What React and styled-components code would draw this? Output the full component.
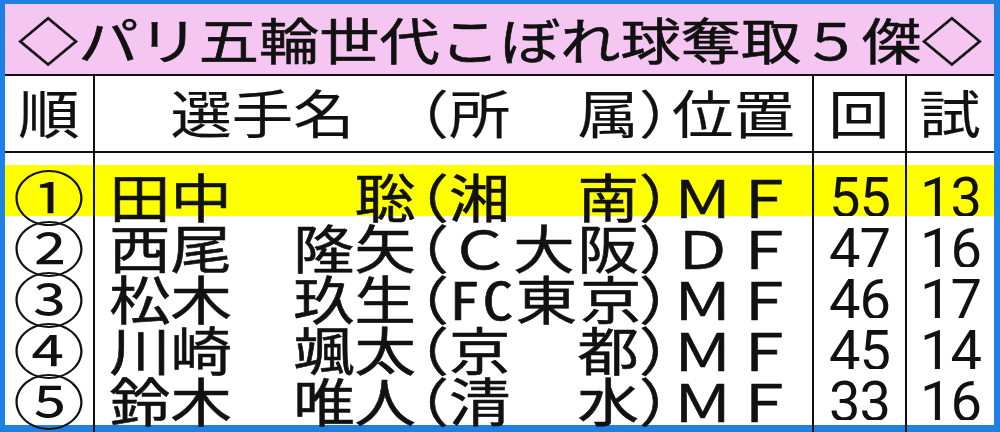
import React from "react";
import styled, { createGlobalStyle } from "styled-components";

const GlobalStyle = createGlobalStyle`
  html, body { margin: 0; padding: 0; background: #fff; }
  body {
    width: 1000px; height: 432px; overflow: hidden;
    font-family: "Noto Sans CJK JP", "Noto Sans", sans-serif;
    color: #111;
  }
`;

const INK = "#111";

const Frame = styled.div`
  width: 1000px;
  height: 432px;
  box-sizing: border-box;
  border-style: solid;
  border-color: #1d80e2;
  border-width: 4px 6px 7px 5px;
  background: #fff;
  display: flex;
  flex-direction: column;
`;

const TitleBar = styled.div`
  flex: none;
  height: 72px;
  box-sizing: border-box;
  background: #f6c6f2;
  border-bottom: 2px solid ${INK};
  display: flex;
  align-items: center;
  justify-content: center;
  overflow: hidden;
`;

const TitleText = styled.h1`
  margin: 0;
  font-size: 50px;
  font-weight: 400;
  -webkit-text-stroke: 0.6px ${INK};
  letter-spacing: 0;
  line-height: 1;
  padding-bottom: 2px;
  white-space: nowrap;
  transform: scaleX(1.205);
`;

const Body = styled.div`
  flex: 1;
  display: flex;
  flex-direction: column;
`;

const Row = styled.div`
  flex: ${(p) => (p.$grow ? "1" : "none")};
  display: grid;
  grid-template-columns: 88px 719px 93px 1fr;
  height: ${(p) => (p.$h ? `${p.$h}px` : "auto")};
  box-sizing: border-box;
  background: ${(p) => (p.$hl ? "#ffff00" : "#fff")};
  border-bottom: ${(p) => (p.$rule ? `2px solid ${INK}` : "none")};
  font-weight: 400;
  -webkit-text-stroke: ${(p) => (p.$head ? "0.2px" : "0.6px")} ${INK};
`;

const Cell = styled.div`
  display: flex;
  align-items: center;
  justify-content: ${(p) => (p.$left ? "flex-start" : "center")};
  border-left: 2px solid ${INK};
  overflow: visible;
  min-width: 0;
  &:first-child { border-left: none; }
`;

const Flat = styled.span`
  display: inline-block;
  font-size: 52px;
  line-height: 1;
  transform: scaleX(1.18);
  padding-bottom: 4px;
`;

const Circled = styled.span`
  display: inline-block;
  font-size: 60px;
  line-height: 1;
  -webkit-text-stroke: 0px;
  transform: scale(1.2, 1);
  padding-bottom: 5px;
`;

const NameGrid = styled.div`
  flex: none;
  width: 608px;
  box-sizing: border-box;
  padding-left: 12px;
  display: grid;
  grid-template-columns: 260px 28px 161px 26px 1fr;
  align-items: center;
  font-size: 52px;
  line-height: 1;
  padding-bottom: 4px;
  transform: scaleX(1.18);
  transform-origin: left center;
  white-space: nowrap;
`;

const Names = styled.div`
  display: flex;
  justify-content: ${(p) => (p.$center ? "center" : "space-between")};
`;

const Paren = styled.span`
  display: flex;
  justify-content: ${(p) => (p.$open ? "flex-end" : "flex-start")};
  font-feature-settings: "halt";
`;

const Team = styled.span`
  text-align: justify;
  text-align-last: justify;
  font-feature-settings: ${(p) => (p.$tight ? '"hwid"' : "normal")};
  letter-spacing: ${(p) => (p.$tight ? "-2px" : "0")};
`;

const Pos = styled.span`
  padding-left: 2px;
`;

const Num = styled.span`
  font-family: Roboto, "Liberation Sans", sans-serif;
  font-weight: 400;
  -webkit-text-stroke: 0px;
  font-size: 56px;
  line-height: 1;
  letter-spacing: -1px;
`;

const players = [
  { rank: "①", family: "田中", given: "聡", team: "湘　南", pos: "ＭＦ", k: 55, g: 13, hl: true },
  { rank: "②", family: "西尾", given: "隆矢", team: "Ｃ大阪", pos: "ＤＦ", k: 47, g: 16 },
  { rank: "③", family: "松木", given: "玖生", team: "ＦＣ東京", pos: "ＭＦ", k: 46, g: 17, tight: true },
  { rank: "④", family: "川崎", given: "颯太", team: "京　都", pos: "ＭＦ", k: 45, g: 14 },
  { rank: "⑤", family: "鈴木", given: "唯人", team: "清　水", pos: "ＭＦ", k: 33, g: 16 },
];

function EmptyRow({ h, grow }) {
  return (
    <Row $h={h} $grow={grow}>
      <Cell />
      <Cell />
      <Cell />
      <Cell />
    </Row>
  );
}

export default function App() {
  return (
    <>
      <GlobalStyle />
      <Frame>
        <TitleBar>
          <TitleText>◇パリ五輪世代こぼれ球奪取５傑◇</TitleText>
        </TitleBar>
        <Row $h={77} $rule $head>
          <Cell><Flat>順</Flat></Cell>
          <Cell $left>
            <NameGrid>
              <Names $center>選手名</Names>
              <Paren $open>（</Paren>
              <Team>所　属</Team>
              <Paren>）</Paren>
              <Pos>位置</Pos>
            </NameGrid>
          </Cell>
          <Cell><Flat>回</Flat></Cell>
          <Cell><Flat>試</Flat></Cell>
        </Row>
        <Body>
          <EmptyRow h={12} />
          {players.map((p) => (
            <Row key={p.rank} $h={51} $hl={p.hl}>
              <Cell><Circled>{p.rank}</Circled></Cell>
              <Cell $left>
                <NameGrid>
                  <Names>
                    <span>{p.family}</span>
                    <span>{p.given}</span>
                  </Names>
                  <Paren $open>（</Paren>
                  <Team $tight={p.tight}>{p.team}</Team>
                  <Paren>）</Paren>
                  <Pos>{p.pos}</Pos>
                </NameGrid>
              </Cell>
              <Cell><Num>{p.k}</Num></Cell>
              <Cell><Num>{p.g}</Num></Cell>
            </Row>
          ))}
          <EmptyRow grow />
        </Body>
      </Frame>
    </>
  );
}
